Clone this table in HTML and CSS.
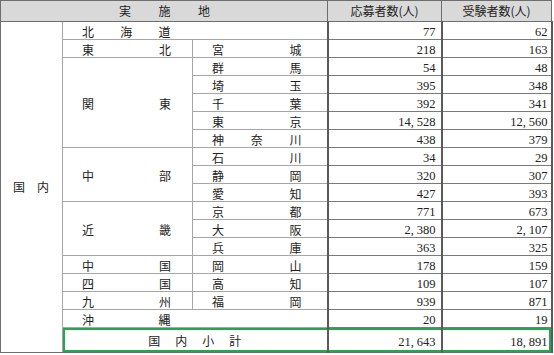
FILE: index.html
```html
<!DOCTYPE html>
<html lang="ja">
<head>
<meta charset="utf-8">
<link rel="stylesheet" href="styles.css">
</head>
<body>
<table class="t">
<colgroup><col class="ca"><col class="cb"><col class="cc"><col class="cd"><col class="ce"></colgroup>
<thead>
<tr class="hd"><th colspan="3" class="dist h-loc">実施地</th><th class="h-num">応募者数(人)</th><th class="h-num">受験者数(人)</th></tr>
</thead>
<tbody>
<tr><td rowspan="18" class="dist dom">国内</td><td colspan="2" class="dist reg wide">北海道</td><td class="num">77</td><td class="num last">62</td></tr>
<tr><td class="dist reg">東北</td><td class="dist pref">宮城</td><td class="num">218</td><td class="num last">163</td></tr>
<tr><td rowspan="5" class="dist reg">関東</td><td class="dist pref">群馬</td><td class="num">54</td><td class="num last">48</td></tr>
<tr><td class="dist pref">埼玉</td><td class="num">395</td><td class="num last">348</td></tr>
<tr><td class="dist pref">千葉</td><td class="num">392</td><td class="num last">341</td></tr>
<tr><td class="dist pref">東京</td><td class="num">14<span class="c">,</span>528</td><td class="num last">12<span class="c">,</span>560</td></tr>
<tr><td class="dist pref">神奈川</td><td class="num">438</td><td class="num last">379</td></tr>
<tr><td rowspan="3" class="dist reg">中部</td><td class="dist pref">石川</td><td class="num">34</td><td class="num last">29</td></tr>
<tr><td class="dist pref">静岡</td><td class="num">320</td><td class="num last">307</td></tr>
<tr><td class="dist pref">愛知</td><td class="num">427</td><td class="num last">393</td></tr>
<tr><td rowspan="3" class="dist reg">近畿</td><td class="dist pref">京都</td><td class="num">771</td><td class="num last">673</td></tr>
<tr><td class="dist pref">大阪</td><td class="num">2<span class="c">,</span>380</td><td class="num last">2<span class="c">,</span>107</td></tr>
<tr><td class="dist pref">兵庫</td><td class="num">363</td><td class="num last">325</td></tr>
<tr><td class="dist reg">中国</td><td class="dist pref">岡山</td><td class="num">178</td><td class="num last">159</td></tr>
<tr><td class="dist reg">四国</td><td class="dist pref">高知</td><td class="num">109</td><td class="num last">107</td></tr>
<tr><td class="dist reg">九州</td><td class="dist pref">福岡</td><td class="num">939</td><td class="num last">871</td></tr>
<tr><td colspan="2" class="dist reg wide">沖縄</td><td class="num">20</td><td class="num last">19</td></tr>
<tr class="sub"><td colspan="2" class="sub-label">国内小計</td><td class="num sub-mid">21<span class="c">,</span>643</td><td class="num sub-end">18<span class="c">,</span>891</td></tr>
</tbody>
</table>
</body>
</html>
```
FILE: styles.css
```css
html, body {
  margin: 0;
  padding: 0;
  background: #ffffff;
}

.t {
  border-collapse: collapse;
  table-layout: fixed;
  width: 551px;
  font-family: "Noto Sans CJK JP", "Noto Sans", sans-serif;
  font-size: 12px;
  color: #222222;
}

.ca { width: 62px; }
.cb { width: 130px; }
.cc { width: 135px; }
.cd { width: 114px; }
.ce { width: 110px; }

.t th, .t td {
  padding: 0;
  line-height: 14px;
  border: 1px solid #a6a6a6;
  white-space: nowrap;
  overflow: hidden;
}

.hd {
  height: 21px;
}

.hd th {
  background: #d9d9d9;
  font-weight: normal;
  border-color: #6e6e6e;
  vertical-align: middle;
}

tbody tr {
  height: 18px;
}

.h-num {
  text-align: center;
}

.dist {
  text-align: justify;
  text-align-last: justify;
}

.h-loc {
  padding: 0 117px 0 118px !important;
}

.t td {
  vertical-align: middle;
}

.dom {
  padding: 0 13px 0 12px !important;
  border-left-color: #6e6e6e !important;
  border-bottom-color: #6e6e6e !important;
}

.reg {
  padding: 2px 21px 0 19px !important;
}

.reg.wide {
  padding-right: 156px !important;
}

.pref {
  padding: 2px 25px 0 19px !important;
}

.num {
  text-align: right;
  vertical-align: bottom !important;
  padding: 0 5px 0 0 !important;
  font-family: "Liberation Serif", "DejaVu Serif", serif;
  font-size: 12.5px;
  line-height: 14px;
  border-left: 2px solid #5a5a5a !important;
  border-right: 2px solid #5a5a5a !important;
  border-top-color: #7a7a7a !important;
  border-bottom-color: #7a7a7a !important;
}

.num.last, .num.sub-end {
  padding-right: 3px !important;
}

.c {
  padding-right: 3px;
}

tbody tr.sub {
  height: 25px;
}

.sub td {
  border-bottom-color: #6e6e6e !important;
}

.sub-label {
  text-align: center;
  letter-spacing: 15px;
  padding: 1px 0 0 15px !important;
  box-shadow: inset 2px 0 0 #1fa84d, inset 0 2px 0 #1fa84d, inset 0 -2px 0 #1fa84d;
}

.sub-mid {
  box-shadow: inset 0 2px 0 #1fa84d, inset 0 -2px 0 #1fa84d;
  padding-bottom: 3px !important;
}

.sub-end {
  box-shadow: inset -2px 0 0 #1fa84d, inset 0 2px 0 #1fa84d, inset 0 -2px 0 #1fa84d;
  padding-bottom: 3px !important;
  padding-right: 5px !important;
}
```
